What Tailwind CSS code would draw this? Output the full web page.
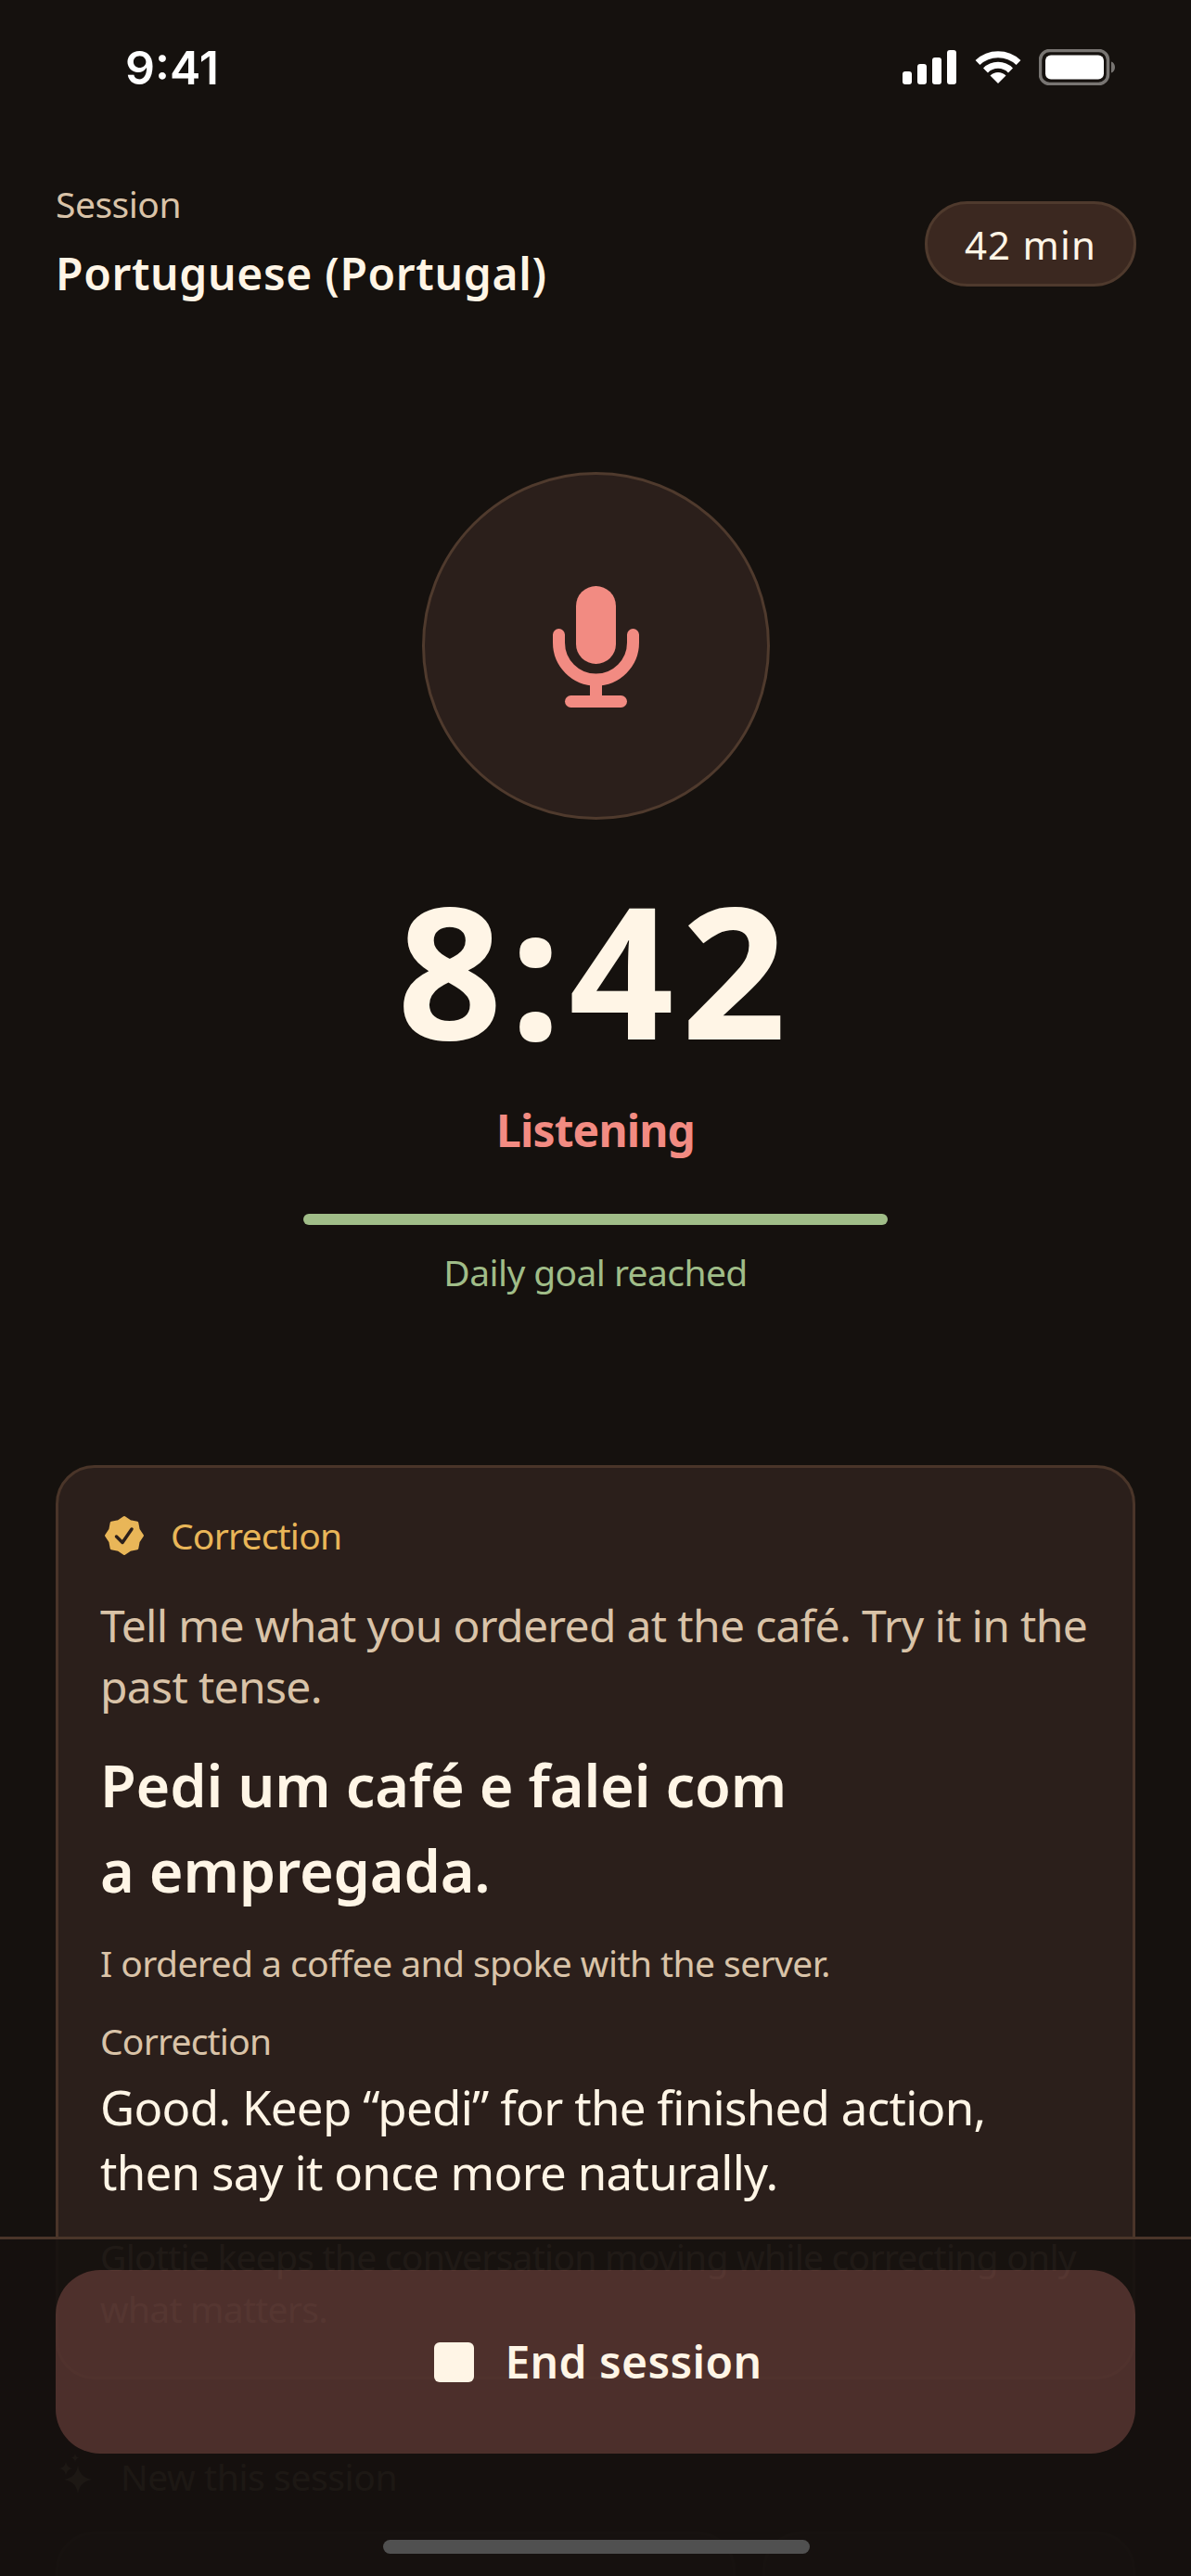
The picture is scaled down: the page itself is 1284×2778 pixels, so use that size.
<!doctype html>
<html><head><meta charset="utf-8"><script src="https://cdn.jsdelivr.net/npm/@tailwindcss/browser@4"></script></head>
<body class="bg-[#15110e]">
<div class="relative w-[1284px] h-[2778px] overflow-hidden bg-[#15110e] text-[#fff5e6] font-['Noto_Sans',sans-serif]">
  <div class="flex items-center justify-between pt-[42px] pl-[135px] pr-[82px] mb-[91px]">
    <span class="translate-y-[1px] font-['Inter',sans-serif] font-semibold text-[50px] leading-[60px] text-white">9:41</span>
    <div class="flex items-center gap-[20px]">
      <svg width="58" height="37" viewBox="0 0 58 37" fill="#fff"><rect x="0" y="23" width="10" height="14" rx="3"/><rect x="16" y="15" width="10" height="22" rx="3"/><rect x="32" y="8" width="10" height="29" rx="3"/><rect x="48" y="0" width="10" height="37" rx="3"/></svg>
      <svg width="50" height="36" viewBox="0 0 50 36" fill="none" stroke="#fff" stroke-width="7"><path d="M3 13.500A32 32 0 0 1 47 13.500"/><path d="M11.500 22A19 19 0 0 1 38.500 22"/><path d="M25 36L16.500 27.500A12 12 0 0 1 33.500 27.500Z" fill="#fff" stroke="none"/></svg>
      <svg width="82" height="39" viewBox="0 0 82 39" class="-ml-px"><rect x="1.500" y="1.500" width="73" height="36" rx="10" fill="none" stroke="#787572" stroke-width="3.500"/><rect x="7" y="6.500" width="63" height="26" rx="6" fill="#fff"/><path d="M78 13.500c2.500 .8 4 3 4 6s-1.500 5.200-4 6z" fill="#787572"/></svg>
    </div>
  </div>

  <div class="flex items-start justify-between px-[60px]">
    <div>
      <p class="text-[39px] leading-[54px] tracking-[-0.5px] text-[#d9c3a8]">Session</p>
      <h1 class="mt-[15px] text-[48px] leading-[66px] font-semibold tracking-[0.65px]">Portuguese (Portugal)</h1>
    </div>
    <div class="mt-[24px] -mr-[1px] flex h-[92px] w-[228px] items-center justify-center rounded-full border-[3px] border-[#4f3a2d] bg-[#3b2820] text-[42px] tracking-[1.2px]">42 min</div>
  </div>

  <div class="mx-auto mt-[181px] flex h-[375px] w-[375px] items-center justify-center rounded-full border-[3px] border-[#4f3a2d] bg-[#2b1f1b] pt-[2px]">
    <svg width="93" height="131" viewBox="596 632 93 131" fill="#f28b82"><rect x="621" y="632" width="43" height="84" rx="21.500"/><path d="M602.500 684.500V693a40 40 0 0 0 80 0V684.500" fill="none" stroke="#f28b82" stroke-width="13" stroke-linecap="round"/><rect x="636" y="735" width="13" height="20"/><rect x="609" y="750" width="67" height="13" rx="6.500"/></svg>
  </div>

  <div class="mt-[61px] text-center text-[198px] leading-[198px] font-bold tracking-[8px]">8:42</div>
  <div class="mt-[43px] text-center text-[48px] leading-[66px] font-bold tracking-[-0.9px] text-[#f28b82]">Listening</div>
  <div class="mx-auto mt-[57px] h-[12px] w-[630px] rounded-full bg-[#a0bd88]"></div>
  <div class="mt-[24px] text-center text-[39px] leading-[54px] tracking-[-0.6px] text-[#a0bd88]">Daily goal reached</div>

  <section class="mx-[60px] mt-[181px] rounded-[42px] border-[3px] border-[#4a3529] bg-[#2b1f1b] px-[45px] pt-[51px] pb-[45px]">
    <div class="flex h-[44px] items-center gap-[28px] pl-[4px]">
      <svg width="44" height="44" viewBox="0 0 44 44"><path d="M22 2.500L28.300 6.800 35.800 8.200 37.200 15.700 41.500 22 37.200 28.300 35.800 35.800 28.300 37.200 22 41.500 15.700 37.200 8.200 35.800 6.800 28.300 2.500 22 6.800 15.700 8.200 8.200 15.700 6.800Z" fill="#e9b658" stroke="#e9b658" stroke-width="3" stroke-linejoin="round"/><path d="M13.500 23L20 29.500 30 15" fill="none" stroke="#2b1f1b" stroke-width="3.500" stroke-linecap="round" stroke-linejoin="round"/></svg>
      <span class="text-[39px] leading-[44px] tracking-[-0.8px] text-[#e9b658]">Correction</span>
    </div>
    <p class="mt-[42px] text-[48px] leading-[66px] tracking-[-0.67px] text-[#d9c3a8]">Tell me what you ordered at the café. Try it in the<br>past tense.</p>
    <p class="mt-[27px] text-[63px] leading-[92px] font-semibold tracking-[-0.2px]">Pedi um café e falei com<br>a empregada.</p>
    <p class="mt-[27px] text-[39px] leading-[54px] tracking-[-0.57px] text-[#d9c3a8]">I ordered a coffee and spoke with the server.</p>
    <p class="mt-[30px] text-[39px] leading-[54px] tracking-[-0.8px] text-[#d9c3a8]">Correction</p>
    <p class="mt-[9px] text-[51px] leading-[70px] tracking-[-0.7px]">Good. Keep “pedi” for the finished action,<br>then say it once more naturally.</p>
    <p class="mt-[29px] text-[39px] leading-[56px] tracking-[-0.75px] text-[#86735f]">Glottie keeps the conversation moving while correcting only<br>what matters.</p>
  </section>

  <div class="mt-[78px] flex h-[54px] items-center gap-[28px] px-[60px] text-[39px] tracking-[-0.4px] text-[#665a4e]">
    <svg width="42" height="46" viewBox="0 0 42 46" fill="#665a4e" class="-mt-[8px]"><path d="M24 15Q26 28 39 30 26 32 24 45 22 32 9 30 22 28 24 15Z"/><path d="M11 11Q12 17 18 18 12 19 11 25 10 19 4 18 10 17 11 11Z"/><path d="M21 2Q21.500 6 25 6.500 21.500 7 21 11 20.500 7 17 6.500 20.500 6 21 2Z"/></svg>
    <span>New this session</span>
  </div>
  <div class="mt-[32px] grid grid-cols-[733px_402px] gap-[29px] px-[60px]">
    <div class="h-[200px] rounded-[42px] border-[3px] border-[#2f241e] bg-[#241a16]"></div>
    <div class="h-[200px] rounded-[42px] border-[3px] border-[#2f241e] bg-[#241a16]"></div>
  </div>

  <footer class="absolute inset-x-0 bottom-0 h-[366px] border-t-[3px] border-[#4a3529] bg-[#15110e]/90 px-[60px] pt-[33px]">
    <button class="flex h-[198px] w-full items-center justify-center gap-[33px] rounded-[48px] bg-[#f28b82]/25 pl-[6px] text-[48px] font-semibold tracking-[0.4px] text-[#fff5e6]">
      <span class="h-[43px] w-[43px] rounded-[6px] bg-[#fff5e6]"></span>
      <span>End session</span>
    </button>
    <div class="absolute bottom-[24px] left-[413px] h-[15px] w-[460px] rounded-full bg-[#505050]"></div>
  </footer>
</div>
</body></html>
